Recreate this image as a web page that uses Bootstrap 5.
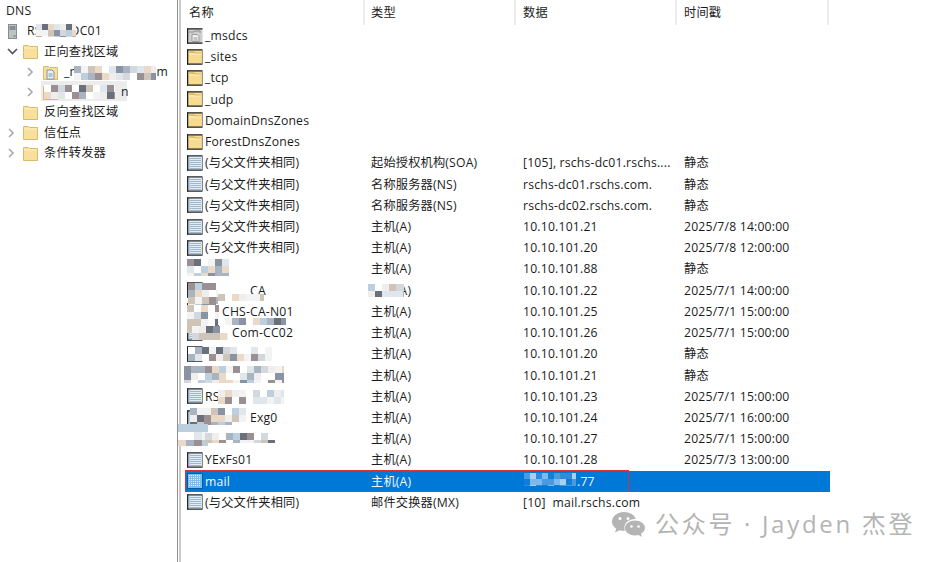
<!DOCTYPE html>
<html lang="zh">
<head>
<meta charset="utf-8">
<title>DNS</title>
<link href="https://cdn.jsdelivr.net/npm/bootstrap@5.3.0/dist/css/bootstrap.min.css" rel="stylesheet">
<style>
html,body{margin:0;height:562px;overflow:hidden;background:#fff}
body{font:12.2px/21.23px "Open Sans","Noto Sans CJK SC",sans-serif;letter-spacing:.2px;color:#1c1c1c;position:relative}
.shell{height:562px}
.treepane{width:177px;padding-top:1px;position:relative;z-index:1}
.tree-row{height:20.3px;line-height:20.3px;white-space:nowrap}
.tree-row svg{flex:none}
.lv0{padding-left:6px}.lv1{padding-left:26px}
.arrow{width:13px;flex:none}
.ticon{margin-left:4px;margin-right:6px}
.lone{padding-left:23px}
.lone svg{margin-right:6px}
.srv{margin-left:2px;margin-right:10px}
.splitter{width:4px;height:562px;border-left:1px solid #8e8e8e;border-right:2px solid #c9c9c9;flex:none}
.listpane{width:648px;margin-left:4px;flex:none}
.head{height:25px;line-height:25px}
.hc{border-right:2px solid #ececec;height:25px;flex:none}
.c1{width:180px;padding-left:4px}
.c2{width:151px;padding-left:6px}
.c3{width:161px;padding-left:7px}
.c4{width:152px;padding-left:7px}
.rec{height:21.23px;white-space:nowrap}
.rec>div{flex:none;height:21.23px;overflow:hidden}
.rec .c1{display:flex;align-items:center;padding-left:2px}
.rec svg{flex:none;margin-right:2px}
.sel{background:#0078d7;color:#f4f8fc;width:645px}
.redbox{position:absolute;left:185px;top:470px;width:444px;height:22px;border:1px solid #d8323c;pointer-events:none;z-index:6}
.treesel{position:absolute;left:41px;top:81px;width:86px;height:20px;background:#ececec;z-index:0}
.mos{position:absolute;z-index:5;display:block;filter:blur(.5px)}
.mark-w{position:absolute;left:611px;top:507px;display:flex;align-items:center;color:#b4b4b4;font:24px/34px "Open Sans","Noto Sans CJK SC",sans-serif;letter-spacing:2.7px;white-space:nowrap}
.mark-w svg{margin-right:8px}
</style>
</head>
<body>
<svg width="0" height="0" class="position-absolute">
<defs>
<symbol id="fold" viewBox="0 0 15 15"><path d="M.5 2.500V1.500h5l1 1h8v12H.5z" fill="#f8df9c" stroke="#d9bb6c"/><path d="M1 4h13" stroke="#fff0c4"/></symbol>
<symbol id="fzone" viewBox="0 0 15 15"><path d="M.5 2.500V1.500h5l1 1h8v12H.5z" fill="#f8df9c" stroke="#d9bb6c"/><path d="M4 5h5l2 2v7H4z" fill="#e8f0f8" stroke="#7f96ad"/><path d="M5.500 9h4M5.500 11h4" stroke="#7f96ad"/></symbol>
<symbol id="foldb" viewBox="0 0 16 16"><path d="M0 .8h15.500v14.500H0z" fill="#f7dc90"/><path d="M0 .8h15.500M0 15.200h15.500" stroke="#1d1d1d" stroke-width="1.300"/><path d="M.6 .5v15" stroke="#1d1d1d" stroke-width="1.300"/><path d="M15.400 1v14" stroke="#8a8a8a"/><path d="M2 3h5l1 1.200h6" stroke="#c7a656" fill="none"/><path d="M2 5h12" stroke="#fff1c8"/></symbol>
<symbol id="zone" viewBox="0 0 16 16"><path d="M0 .8h15.500v14.500H0z" fill="#cfcfcf"/><path d="M0 .8h15.500M0 15.200h15.500" stroke="#1d1d1d" stroke-width="1.300"/><path d="M.6 .5v15" stroke="#1d1d1d" stroke-width="1.300"/><path d="M2 4h5l1-1h5v2" stroke="#8e8e8e" fill="none"/><path d="M5 6.500h5l2 2v5H5z" fill="#f2f2f2" stroke="#9a9a9a"/><path d="M6.500 10h4M6.500 12h4" stroke="#9a9a9a"/></symbol>
<symbol id="recd" viewBox="0 0 16 16"><path d="M0 .8h15.500v14.500H0z" fill="#e3edf6"/><path d="M0 .8h15.500M0 15.200h15.500" stroke="#262626" stroke-width="1.300"/><path d="M.7 .5v15" stroke="#262626" stroke-width="1.400"/><path d="M15.400 1v14" stroke="#6f7a86"/><path d="M2 2v12" stroke="#8faac2"/><path d="M3 3.500h11M3 5.500h11M3 7.500h11M3 9.500h11M3 11.500h11M3 13.500h11" stroke="#9fb6cb"/></symbol>
<symbol id="recs" viewBox="0 0 16 16"><rect x=".5" y=".5" width="15" height="15" fill="#7fbcec" stroke="#0a5aa0"/><path d="M2 2.500h12M2 4.500h12M2 6.500h12M2 8.500h12M2 10.500h12M2 12.500h12" stroke="#e4f0fa" stroke-dasharray="1 1"/></symbol>
</defs>
</svg>
<div class="treesel"></div>
<div class="d-flex shell">
  <div class="treepane">
    <div class="tree-row lv0">DNS</div>
    <div class="tree-row lv0 d-flex align-items-center"><svg class="srv" width="9" height="15" viewBox="0 0 9 15"><rect x=".5" y=".5" width="8" height="14" fill="#bcc2c6" stroke="#878d92"/><path d="M1.500 3h6M1.500 5h6" stroke="#565c60"/><rect x="5.500" y="11" width="2" height="2" fill="#7fa35f"/></svg>RS<span style="margin-left:29px">DC01</span></div>
    <div class="tree-row lv0 d-flex align-items-center"><svg class="arrow" height="9" viewBox="0 0 13 9"><path d="M2 2l4.500 4.500L11 2" fill="none" stroke="#555" stroke-width="1.600"/></svg><svg class="ticon" width="15" height="15"><use href="#fold"/></svg>正向查找区域</div>
    <div class="tree-row lv1 d-flex align-items-center"><svg class="arrow" height="10" viewBox="0 0 13 10"><path d="M2 1l4 4-4 4" fill="none" stroke="#a8a8a8" stroke-width="1.600"/></svg><svg class="ticon" width="15" height="15"><use href="#fzone"/></svg>_m<span style="margin-left:68px">om</span></div>
    <div class="tree-row lv1 d-flex align-items-center"><svg class="arrow" height="10" viewBox="0 0 13 10"><path d="M2 1l4 4-4 4" fill="none" stroke="#a8a8a8" stroke-width="1.600"/></svg><svg class="ticon" width="15" height="15"><use href="#fold"/></svg><span style="margin-left:57px">n</span></div>
    <div class="tree-row lone d-flex align-items-center"><svg width="15" height="15"><use href="#fold"/></svg>反向查找区域</div>
    <div class="tree-row lv0 d-flex align-items-center"><svg class="arrow" height="10" viewBox="0 0 13 10"><path d="M3 1l4 4-4 4" fill="none" stroke="#a8a8a8" stroke-width="1.600"/></svg><svg class="ticon" width="15" height="15"><use href="#fold"/></svg>信任点</div>
    <div class="tree-row lv0 d-flex align-items-center"><svg class="arrow" height="10" viewBox="0 0 13 10"><path d="M3 1l4 4-4 4" fill="none" stroke="#a8a8a8" stroke-width="1.600"/></svg><svg class="ticon" width="15" height="15"><use href="#fold"/></svg>条件转发器</div>
  </div>
  <div class="splitter"></div>
  <div class="listpane">
    <div class="d-flex head">
      <div class="hc c1">名称</div><div class="hc c2">类型</div><div class="hc c3">数据</div><div class="hc c4">时间戳</div>
    </div>
    <div>
      <div class="rec d-flex"><div class="c1"><svg width="16" height="16"><use href="#zone"/></svg>_msdcs</div><div class="c2"></div><div class="c3"></div><div class="c4"></div></div>
      <div class="rec d-flex"><div class="c1"><svg width="16" height="16"><use href="#foldb"/></svg>_sites</div><div class="c2"></div><div class="c3"></div><div class="c4"></div></div>
      <div class="rec d-flex"><div class="c1"><svg width="16" height="16"><use href="#foldb"/></svg>_tcp</div><div class="c2"></div><div class="c3"></div><div class="c4"></div></div>
      <div class="rec d-flex"><div class="c1"><svg width="16" height="16"><use href="#foldb"/></svg>_udp</div><div class="c2"></div><div class="c3"></div><div class="c4"></div></div>
      <div class="rec d-flex"><div class="c1"><svg width="16" height="16"><use href="#foldb"/></svg>DomainDnsZones</div><div class="c2"></div><div class="c3"></div><div class="c4"></div></div>
      <div class="rec d-flex"><div class="c1"><svg width="16" height="16"><use href="#foldb"/></svg>ForestDnsZones</div><div class="c2"></div><div class="c3"></div><div class="c4"></div></div>
      <div class="rec d-flex"><div class="c1"><svg width="16" height="16"><use href="#recd"/></svg>(与父文件夹相同)</div><div class="c2">起始授权机构(SOA)</div><div class="c3">[105], rschs-dc01.rschs....</div><div class="c4">静态</div></div>
      <div class="rec d-flex"><div class="c1"><svg width="16" height="16"><use href="#recd"/></svg>(与父文件夹相同)</div><div class="c2">名称服务器(NS)</div><div class="c3">rschs-dc01.rschs.com.</div><div class="c4">静态</div></div>
      <div class="rec d-flex"><div class="c1"><svg width="16" height="16"><use href="#recd"/></svg>(与父文件夹相同)</div><div class="c2">名称服务器(NS)</div><div class="c3">rschs-dc02.rschs.com.</div><div class="c4">静态</div></div>
      <div class="rec d-flex"><div class="c1"><svg width="16" height="16"><use href="#recd"/></svg>(与父文件夹相同)</div><div class="c2">主机(A)</div><div class="c3">10.10.101.21</div><div class="c4">2025/7/8 14:00:00</div></div>
      <div class="rec d-flex"><div class="c1"><svg width="16" height="16"><use href="#recd"/></svg>(与父文件夹相同)</div><div class="c2">主机(A)</div><div class="c3">10.10.101.20</div><div class="c4">2025/7/8 12:00:00</div></div>
      <div class="rec d-flex"><div class="c1"></div><div class="c2">主机(A)</div><div class="c3">10.10.101.88</div><div class="c4">静态</div></div>
      <div class="rec d-flex"><div class="c1"><svg width="16" height="16"><use href="#recd"/></svg><span style="margin-left:45px">CA</span></div><div class="c2">主机(A)</div><div class="c3">10.10.101.22</div><div class="c4">2025/7/1 14:00:00</div></div>
      <div class="rec d-flex"><div class="c1"><svg width="16" height="16"><use href="#recd"/></svg><span style="margin-left:17px">CHS-CA-N01</span></div><div class="c2">主机(A)</div><div class="c3">10.10.101.25</div><div class="c4">2025/7/1 15:00:00</div></div>
      <div class="rec d-flex"><div class="c1"><svg width="16" height="16"><use href="#recd"/></svg><span style="margin-left:27px">Com-CC02</span></div><div class="c2">主机(A)</div><div class="c3">10.10.101.26</div><div class="c4">2025/7/1 15:00:00</div></div>
      <div class="rec d-flex"><div class="c1"><svg width="16" height="16"><use href="#recd"/></svg></div><div class="c2">主机(A)</div><div class="c3">10.10.101.20</div><div class="c4">静态</div></div>
      <div class="rec d-flex"><div class="c1"></div><div class="c2">主机(A)</div><div class="c3">10.10.101.21</div><div class="c4">静态</div></div>
      <div class="rec d-flex"><div class="c1"><svg width="16" height="16"><use href="#recd"/></svg>RS</div><div class="c2">主机(A)</div><div class="c3">10.10.101.23</div><div class="c4">2025/7/1 15:00:00</div></div>
      <div class="rec d-flex"><div class="c1"><svg width="16" height="16"><use href="#recd"/></svg><span style="margin-left:45px">Exg0</span></div><div class="c2">主机(A)</div><div class="c3">10.10.101.24</div><div class="c4">2025/7/1 16:00:00</div></div>
      <div class="rec d-flex"><div class="c1"></div><div class="c2">主机(A)</div><div class="c3">10.10.101.27</div><div class="c4">2025/7/1 15:00:00</div></div>
      <div class="rec d-flex"><div class="c1"><svg width="16" height="16"><use href="#recd"/></svg>YExFs01</div><div class="c2">主机(A)</div><div class="c3">10.10.101.28</div><div class="c4">2025/7/3 13:00:00</div></div>
      <div class="rec d-flex sel"><div class="c1"><svg width="16" height="16"><use href="#recs"/></svg>mail</div><div class="c2">主机(A)</div><div class="c3"><span style="margin-left:54px">.77</span></div><div class="c4"></div></div>
      <div class="rec d-flex"><div class="c1"><svg width="16" height="16"><use href="#recd"/></svg>(与父文件夹相同)</div><div class="c2">邮件交换器(MX)</div><div class="c3">[10]&nbsp;&nbsp;mail.rschs.com</div><div class="c4"></div></div>
    </div>
  </div>
</div>
<div class="redbox"></div>
<div id="mosaics"></div>
<div class="mark-w"><svg width="36" height="26" viewBox="0 0 36 26"><path d="M13 1C6 1 1 5.500 1 10.500c0 3 1.600 5.500 4.200 7.300L4 21.500l4.500-2.300c1.400.4 2.900.6 4.500.6h1c-.4-1-.6-2-.6-3 0-5 4.700-8.800 10.500-8.800h.8C23.700 4 18.800 1 13 1z" fill="#b4b4b4"/><path d="M24 9.500c-5.300 0-10 3.300-10 7.500s4.700 7.500 10 7.500c1.200 0 2.400-.2 3.500-.5l3.500 2-1-3.200c2.500-1.500 4-3.600 4-5.800 0-4.200-4.700-7.500-10-7.500z" fill="#b4b4b4"/><circle cx="9" cy="7.500" r="1.500" fill="#fff"/><circle cx="17" cy="7.500" r="1.500" fill="#fff"/><circle cx="20.500" cy="15.500" r="1.300" fill="#fff"/><circle cx="27.500" cy="15.500" r="1.300" fill="#fff"/></svg>公众号 · Jayden 杰登</div>
<script>
// blurred-out regions of the picture: x, y, w, h, cell size
var spots=[[36,24,40,13,6],[74,66,82,14,7],[44,85,71,14,7],[187,259,42,17,7],[188,283,30,24,7],[218,294,46,7,7],[368,284,36,13,7],[187,305,32,28,7],[218,318,68,7,7],[192,326,36,14,7],[188,347,84,14,7],[184,366,100,17,7],[218,390,66,14,7],[190,408,56,17,7],[178,424,30,22,8],[205,433,70,10,7],[524,473,52,13,6]];
var pal=['#dfe6ec','#bccfdf','#8a93a3','#cfc4b8','#ead9c6','#6a6f7c','#f3f3f3','#a9b4c2','#ffffff','#d3d8de','#ffffff','#efeeec','#9a8f92'];
var seed=11;function rnd(){seed=(seed*16807)%2147483647;return seed/2147483647;}
var host=document.getElementById('mosaics'),ns='http://www.w3.org/2000/svg';
spots.forEach(function(s,i){
  var svg=document.createElementNS(ns,'svg');svg.setAttribute('class','mos');
  svg.setAttribute('width',s[2]);svg.setAttribute('height',s[3]);svg.style.left=s[0]+'px';svg.style.top=s[1]+'px';
  for(var y=0;y<s[3];y+=s[4])for(var x=0;x<s[2];x+=s[4]){
    var r=document.createElementNS(ns,'rect');r.setAttribute('x',x);r.setAttribute('y',y);r.setAttribute('width',s[4]);r.setAttribute('height',s[4]);
    var c=pal[Math.floor(rnd()*pal.length)];
    if(i==spots.length-1){c=['#4a9ae0','#7db9ea','#2f8bdc','#a9d0f0','#0f7fd9'][Math.floor(rnd()*5)];}
    r.setAttribute('fill',c);svg.appendChild(r);
  }
  host.appendChild(svg);
});
</script>
</body>
</html>
